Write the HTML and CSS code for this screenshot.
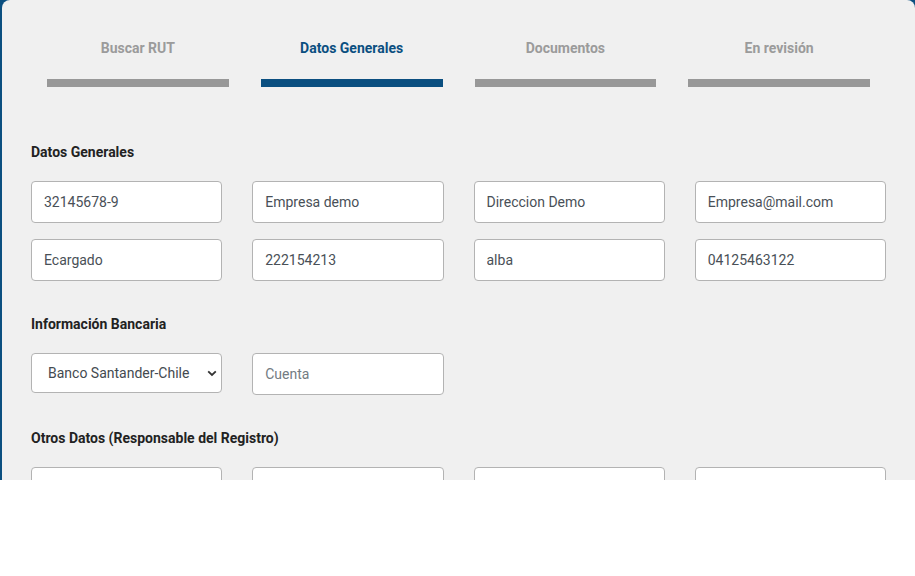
FILE: index.html
```html
<!DOCTYPE html>
<html lang="es">
<head>
<meta charset="utf-8">
<title>Registro</title>
<link rel="stylesheet" href="styles.css">
</head>
<body>
<div class="frame">
  <div class="panel">
    <div class="steps">
      <div class="step"><span class="step-label">Buscar RUT</span><span class="step-bar"></span></div>
      <div class="step active"><span class="step-label">Datos Generales</span><span class="step-bar"></span></div>
      <div class="step"><span class="step-label">Documentos</span><span class="step-bar"></span></div>
      <div class="step"><span class="step-label">En revisión</span><span class="step-bar"></span></div>
    </div>

    <section class="section first">
      <h3 class="section-title">Datos Generales</h3>
      <div class="grid">
        <input class="field" type="text" value="32145678-9">
        <input class="field" type="text" value="Empresa demo">
        <input class="field" type="text" value="Direccion Demo">
        <input class="field" type="text" value="Empresa@mail.com">
        <input class="field" type="text" value="Ecargado">
        <input class="field" type="text" value="222154213">
        <input class="field" type="text" value="alba">
        <input class="field" type="text" value="04125463122">
      </div>
    </section>

    <section class="section">
      <h3 class="section-title">Información Bancaria</h3>
      <div class="grid">
        <div class="select-wrap">
          <select class="field select">
            <option>Banco Santander-Chile</option>
          </select>
          <svg class="chevron" width="10" height="7" viewBox="0 0 10 7"><path d="M1.2 1.3 L5 5 L8.8 1.3" fill="none" stroke="#333" stroke-width="1.8"/></svg>
        </div>
        <input class="field" type="text" placeholder="Cuenta">
      </div>
    </section>

    <section class="section">
      <h3 class="section-title">Otros Datos (Responsable del Registro)</h3>
      <div class="grid">
        <input class="field" type="text">
        <input class="field" type="text">
        <input class="field" type="text">
        <input class="field" type="text">
      </div>
    </section>
  </div>
</div>
</body>
</html>
```
FILE: styles.css
```css
* { box-sizing: border-box; }
html, body {
  margin: 0;
  padding: 0;
  background: #ffffff;
  font-family: Roboto, "Liberation Sans", Arial, sans-serif;
}
.frame {
  height: 480px;
  overflow: hidden;
  background: #0b4f80;
  padding-left: 2px;
}
.panel {
  background: #f0f0f0;
  border-radius: 8px 8px 0 0;
  min-height: 100%;
  padding: 0 29px 40px 29px;
}
.steps {
  display: grid;
  grid-template-columns: repeat(4, 1fr);
  padding-top: 38px;
}
.step {
  display: flex;
  flex-direction: column;
  align-items: stretch;
  padding: 0 16px;
}
.step-label {
  text-align: center;
  font-size: 14px;
  font-weight: 700;
  line-height: 20px;
  color: #9b9b9b;
}
.step-bar {
  display: block;
  height: 8px;
  margin-top: 21px;
  background: #989898;
}
.step.active .step-label { color: #0b4f80; }
.step.active .step-bar { background: #0b4f80; }

.section { margin-top: 33px; }
.section.first { margin-top: 55px; }
.section-title {
  margin: 0 0 19px 0;
  font-size: 14px;
  font-weight: 700;
  line-height: 20px;
  color: #222222;
}
.grid {
  display: grid;
  grid-template-columns: repeat(4, 1fr);
  column-gap: 30px;
  row-gap: 16px;
}
.field {
  display: block;
  width: 100%;
  height: 42px;
  margin: 0;
  padding: 0 12px;
  border: 1px solid #b3b3b3;
  border-radius: 4px;
  background: #ffffff;
  font-family: Roboto, "Liberation Sans", Arial, sans-serif;
  font-size: 14px;
  color: #495057;
  outline: none;
}
.field::placeholder { color: #737b82; }
.select-wrap { position: relative; }
.select {
  -webkit-appearance: none;
  appearance: none;
  height: 40px;
  padding: 0 30px 0 16px;
  color: #444a50;
}
.chevron {
  position: absolute;
  right: 5px;
  top: 17px;
}
```
